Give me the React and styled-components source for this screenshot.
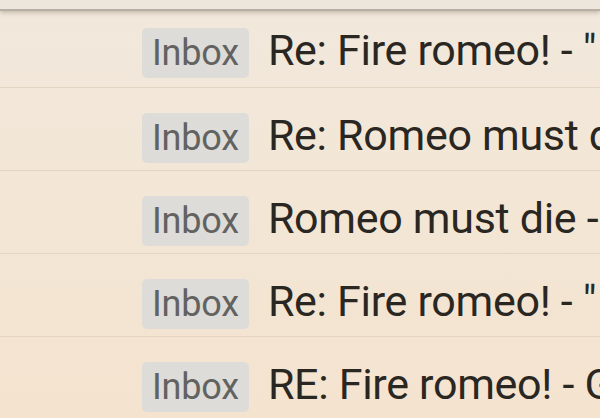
import React from 'react'
import styled, { createGlobalStyle } from 'styled-components'

const GlobalStyle = createGlobalStyle`
  html, body {
    margin: 0;
    padding: 0;
    background: #f2e6d6;
    overflow: hidden;
  }
  body {
    font-family: Roboto, "Liberation Sans", sans-serif;
  }
`

const Page = styled.div`
  width: 600px;
  height: 418px;
  overflow: hidden;
  background: linear-gradient(180deg, #f1e8dc 0%, #f3e6d5 50%, #f4e3cf 100%);
`

const TopBar = styled.div`
  height: 9px;
  background: #ede6dc;
  border-bottom: 2px solid #b7afa3;
  box-shadow: 0 2px 4px rgba(120, 105, 85, 0.35);
  position: relative;
`

const List = styled.div`
  display: flex;
  flex-direction: column;
`

const Row = styled.div`
  display: flex;
  align-items: baseline;
  gap: 19px;
  height: 83px;
  box-sizing: border-box;
  padding: 22px 0 0 142px;
  border-bottom: 1.5px solid #e3d5c2;
  white-space: nowrap;
  overflow: hidden;

  &:first-child {
    height: 77px;
    padding-top: 14px;
  }
`

const Badge = styled.span`
  flex: none;
  padding: 0 10px;
  height: 50px;
  line-height: 50px;
  border-radius: 5px;
  background: #dddcd8;
  color: #626261;
  font-size: 36px;
  letter-spacing: -0.2px;
`

const Subject = styled.span`
  color: #2a2723;
  font-size: 43px;
  letter-spacing: -0.3px;
`

const mails = [
  'Re: Fire romeo! - "',
  'Re: Romeo must die',
  'Romeo must die - ',
  'Re: Fire romeo! - "',
  'RE: Fire romeo! - G',
]

export default function App() {
  return (
    <Page>
      <GlobalStyle />
      <TopBar />
      <List>
        {mails.map((subject, i) => (
          <Row key={i}>
            <Badge>Inbox</Badge>
            <Subject>{subject}</Subject>
          </Row>
        ))}
      </List>
    </Page>
  )
}
